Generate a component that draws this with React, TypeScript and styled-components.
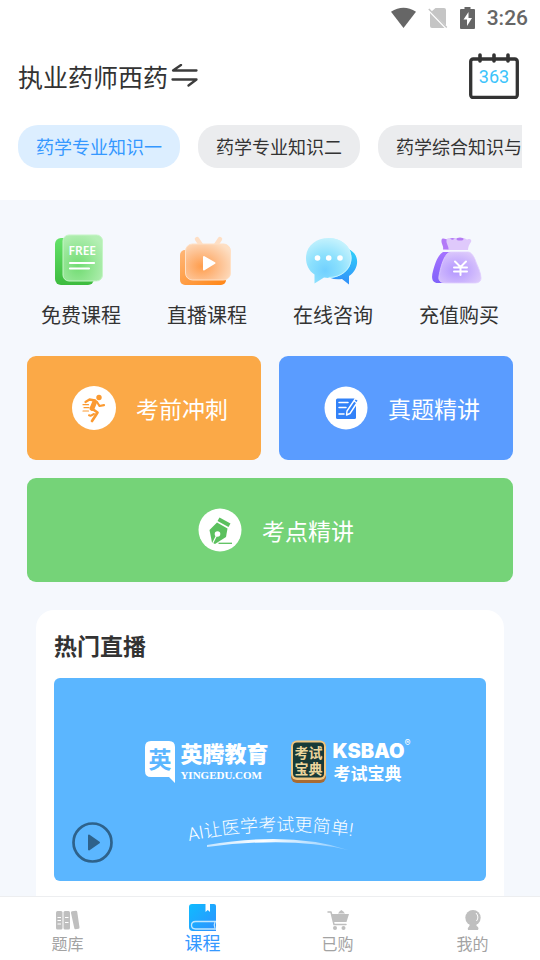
import React from "react";
import styled, { createGlobalStyle } from "styled-components";

const GlobalStyle = createGlobalStyle`
  * { box-sizing: border-box; }
  body {
    margin: 0;
    background: #f5f8fd;
    color: #333;
    font-family: "Noto Sans CJK SC", sans-serif;
  }
  button { font: inherit; color: inherit; border: 0; padding: 0; background: none; cursor: pointer; }
  svg { display: block; flex: none; }
`;

const Screen = styled.div`
  height: 100vh;
  display: flex;
  flex-direction: column;
  overflow: hidden;
`;

const Header = styled.header`
  flex: none;
  background: #fff;
  padding: 0 18px 32px;
`;

const StatusBar = styled.div`
  height: 36px;
  margin-right: -6px;
  display: flex;
  align-items: center;
  justify-content: flex-end;
  gap: 12px;
  color: #666;
  font-family: Roboto, sans-serif;
  font-size: 21px;
  font-weight: 500;
  line-height: 36px;
`;

const TitleRow = styled.div`
  display: flex;
  align-items: center;
  justify-content: space-between;
  padding: 17px 3px 0 0;
`;

const CourseSwitch = styled.button`
  display: flex;
  align-items: center;
  gap: 3px;
  font-size: 25px;
  line-height: 46px;
`;

const CourseName = styled.h1`
  margin: 0;
  font: inherit;
`;

const Calendar = styled.button`
  display: grid;
  width: 50px;
  height: 46px;
  > * { grid-area: 1 / 1; }
`;

const DayCount = styled.span`
  color: #3cc4fb;
  font-family: Roboto, sans-serif;
  font-size: 18px;
  line-height: 48px;
  text-align: center;
`;

const Tabs = styled.div`
  display: flex;
  gap: 18px;
  margin-top: 26px;
  overflow: hidden;
`;

const Tab = styled.button<{ $active?: boolean }>`
  flex: none;
  height: 43px;
  padding: 0 18px;
  border-radius: 20px;
  font-size: 18px;
  line-height: 43px;
  white-space: nowrap;
  background: ${(p) => (p.$active ? "#dceeff" : "#ebecee")};
  color: ${(p) => (p.$active ? "#3598ff" : "#333")};
`;

const Content = styled.main`
  flex: 1;
  min-height: 0;
  overflow: hidden;
`;

const Shortcuts = styled.div`
  display: grid;
  grid-template-columns: repeat(4, 1fr);
  padding: 33px 18px 27px;
`;

const Shortcut = styled.button`
  display: flex;
  flex-direction: column;
  align-items: center;
  gap: 14px;
  font-size: 20px;
  line-height: 28px;
`;

const Features = styled.div`
  display: grid;
  grid-template-columns: 1fr 1fr;
  gap: 18px;
  padding: 0 27px;
`;

const Feature = styled.button<{ $color: string; $wide?: boolean }>`
  grid-column: ${(p) => (p.$wide ? "1 / -1" : "auto")};
  height: 104px;
  display: flex;
  align-items: center;
  justify-content: center;
  gap: 20px;
  padding-left: 12px;
  border-radius: 9px;
  background: ${(p) => p.$color};
  color: #fff;
  font-size: 23px;
  line-height: 32px;
`;

const Panel = styled.section`
  margin: 28px 36px 0;
  padding: 18px 18px 48px;
  border-radius: 18px;
  background: #fff;
`;

const PanelTitle = styled.h2`
  margin: 0 0 16px;
  font-size: 23px;
  font-weight: 700;
  line-height: 34px;
`;

const Banner = styled.div`
  position: relative;
  min-height: 203px;
  display: flex;
  flex-direction: column;
  align-items: center;
  padding-top: 60px;
  padding-left: 16px;
  border-radius: 6px;
  background: #5bb6ff;
  color: #fff;
`;

const Brands = styled.div`
  display: flex;
  gap: 23px;
`;

const Brand = styled.div`
  display: flex;
  gap: 5px;
`;

const BrandText = styled.div`
  display: flex;
  flex-direction: column;
  font-weight: 700;
`;

const YingName = styled.span`
  font-size: 22px;
  font-weight: 900;
  line-height: 28px;
`;

const YingDomain = styled.span`
  font-family: "Liberation Serif", serif;
  font-size: 11px;
  line-height: 18px;
`;

const KsName = styled.span`
  display: flex;
  font-family: Inter, "Liberation Sans", sans-serif;
  font-size: 20px;
  font-weight: 900;
  line-height: 26px;
`;

const Registered = styled.span`
  font-size: 9px;
  font-weight: 400;
  line-height: 10px;
`;

const KsChinese = styled.span`
  padding-left: 1px;
  font-size: 17px;
  line-height: 18px;
`;

const Slogan = styled.div`
  margin-top: 24px;
`;

const PlayButton = styled.button`
  position: absolute;
  left: 18px;
  bottom: 18px;
`;

const NavBar = styled.nav`
  flex: none;
  height: 64px;
  display: grid;
  grid-template-columns: repeat(4, 1fr);
  background: #fff;
  border-top: 1px solid #edeef0;
`;

const NavItem = styled.a<{ $active?: boolean }>`
  display: flex;
  flex-direction: column;
  align-items: center;
  justify-content: flex-end;
  padding-bottom: ${(p) => (p.$active ? 7 : 6)}px;
  gap: ${(p) => (p.$active ? 0 : 2)}px;
  color: ${(p) => (p.$active ? "#3598ff" : "#a3a3a3")};
  font-size: ${(p) => (p.$active ? 18 : 16)}px;
  line-height: 22px;
  text-decoration: none;
`;

const WifiIcon = () => (
  <svg width="25" height="22" viewBox="0 0 26 22" fill="#666" aria-hidden="true">
    <path d="M0 4.500Q13-4 26 4.500L13 21.500Z" />
  </svg>
);

const NoSimIcon = () => (
  <svg width="20" height="22" viewBox="0 0 20 22" aria-hidden="true">
    <path d="M7.500 1H16q2 0 2 2v15.500L3.500 4.500ZM2 6l14.500 15H4q-2 0-2-2Z" fill="#c5c5c5" />
    <path d="M.8 2l18 18.500" stroke="#c5c5c5" strokeWidth="1.500" />
  </svg>
);

const BatteryIcon = () => (
  <svg width="15" height="22" viewBox="0 0 15 22" aria-hidden="true">
    <path d="M4.500 0h6v2H14q1 0 1 1v18q0 1-1 1H1q-1 0-1-1V3q0-1 1-1h3.500Z" fill="#666" />
    <path d="M8.500 5L3.500 12.500H7V19l5-8H8.500Z" fill="#fff" />
  </svg>
);

const SwapIcon = () => (
  <svg width="27" height="25" viewBox="0 0 27 25" fill="none" stroke="#3c3c3c" strokeWidth="2.300" strokeLinecap="round" strokeLinejoin="round" aria-hidden="true">
    <path d="M25.500 6.500H2l8-5.500M1.500 15.500H25.500L17.500 21.500" />
  </svg>
);

const CalendarIcon = () => (
  <svg width="50" height="46" viewBox="0 0 50 46" fill="none" stroke="#333" strokeLinecap="round" aria-hidden="true">
    <rect x="1.700" y="6" width="46.600" height="38.500" rx="2.500" strokeWidth="3.300" />
    <path d="M11 2v6M25 2v6M39 2v6" strokeWidth="3.600" />
  </svg>
);

const FreeIcon = () => (
  <svg width="54" height="54" viewBox="0 0 54 54" aria-hidden="true">
    <defs>
      <linearGradient id="freeBack" x1="0" y1="0" x2="0" y2="1">
        <stop stopColor="#65e26a" /><stop offset="1" stopColor="#3dbb3e" />
      </linearGradient>
      <radialGradient id="freeFront" cx=".38" cy=".68" r=".75">
        <stop stopColor="#71dc72" /><stop offset="1" stopColor="#b5efb5" />
      </radialGradient>
    </defs>
    <rect x="1" y="5" width="39" height="47" rx="6" fill="url(#freeBack)" />
    <rect x="9" y="2" width="39.500" height="46" rx="6" fill="url(#freeFront)" stroke="#c5f5c6" />
    <text x="14.500" y="22" fill="#fff" fontFamily="Noto Sans" fontWeight="600" fontSize="12">FREE</text>
    <path d="M16 30h24M16 35.500h19" stroke="#fff" strokeWidth="2.200" strokeLinecap="round" />
  </svg>
);

const LiveIcon = () => (
  <svg width="54" height="54" viewBox="0 0 54 54" aria-hidden="true">
    <defs>
      <linearGradient id="liveBack" x1="0" y1="0" x2="1" y2="1">
        <stop stopColor="#ffb779" /><stop offset="1" stopColor="#ff8514" />
      </linearGradient>
      <radialGradient id="liveFront" cx=".36" cy=".62" r=".75">
        <stop stopColor="#ff9d4c" /><stop offset=".55" stopColor="#fdc191" /><stop offset="1" stopColor="#fddfc4" />
      </radialGradient>
    </defs>
    <rect x="0" y="17" width="46" height="35" rx="5" fill="url(#liveBack)" />
    <path d="M17 6l4 6M40 6l-4 6" stroke="#fedfc5" strokeWidth="4.500" strokeLinecap="round" />
    <rect x="5.500" y="11" width="45" height="36" rx="7" fill="url(#liveFront)" stroke="#ffe0c5" />
    <path d="M24 24l10.500 6L24 36.500Z" fill="#fff" stroke="#fff" strokeWidth="2" strokeLinejoin="round" />
  </svg>
);

const ChatIcon = () => (
  <svg width="54" height="54" viewBox="0 0 54 54" aria-hidden="true">
    <defs>
      <linearGradient id="chatBack" x1=".7" y1="0" x2=".5" y2="1">
        <stop stopColor="#31d0fa" /><stop offset="1" stopColor="#318df9" />
      </linearGradient>
      <radialGradient id="chatFront" cx=".42" cy=".72" r=".75">
        <stop stopColor="#70d0ff" /><stop offset=".45" stopColor="#8be0fd" /><stop offset="1" stopColor="#c8f3fd" />
      </radialGradient>
    </defs>
    <path d="M42 16c13 5 11 21 1 27v8.500L36 46c-8 1-14-1-18-5Z" fill="url(#chatBack)" />
    <path d="M22.500 5C35 5 45.500 13 45.500 25S35 45 22.500 45l-4.500-.5-9.500 6V41.500C3 38 0 32 0 25 0 13 10 5 22.500 5Z" fill="url(#chatFront)" />
    <path d="M22.500 5.500C35 5.500 45 13.500 45 25S35 44.500 22.500 44.500" fill="none" stroke="#c3f3ff" />
    <g fill="#fff"><circle cx="11.500" cy="25" r="2.800" /><circle cx="22.700" cy="25" r="2.800" /><circle cx="34" cy="25" r="2.800" /></g>
  </svg>
);

const MoneyIcon = () => (
  <svg width="54" height="54" viewBox="0 0 54 54" aria-hidden="true">
    <defs>
      <linearGradient id="bagBack" x1="0" y1="0" x2="0" y2="1">
        <stop stopColor="#a673ff" /><stop offset="1" stopColor="#8062fa" />
      </linearGradient>
      <radialGradient id="bagFront" cx=".42" cy=".6" r=".65">
        <stop stopColor="#b295ff" /><stop offset="1" stopColor="#ddcafb" />
      </radialGradient>
    </defs>
    <path d="M11 16.500C12 13 9 11 9.500 7c.5-2.500 3-1.500 4-1 2 1 4-1 7-1l5 1 5 11Z" fill="#b37af7" />
    <path d="M16.500 17C17 13 14 11 14.500 7c.5-2.500 3-2 5-.5 2 1 3-1.500 5-1.500h7c2 0 3 2.500 5 1 2-.5 3.500 1 2.500 3-2 3-3 5-3 8Z" fill="#dfc9fb" />
    <ellipse cx="28" cy="6" rx="3.500" ry="1.600" fill="#b57bf4" />
    <path d="M11 19h20L27 50H6C0 50-1 45 1 38 3 31 5 23 11 19Z" fill="url(#bagBack)" />
    <path d="M19 19h17c3 0 6 4 8 10 2 5 5 11 5 16 0 4-3 5-7 5H14c-5 0-8-2-7-7 1-6 5-24 12-24Z" fill="url(#bagFront)" stroke="#dfceff" strokeWidth=".8" />
    <path d="M23 28.500l5.500 5.500 5.500-5.500M28.500 34v8M22 34.500h13M22 38.500h13" fill="none" stroke="#fff" strokeWidth="2" strokeLinecap="round" strokeLinejoin="round" />
  </svg>
);

const RunnerIcon = () => (
  <svg width="44" height="44" viewBox="0 0 44 44" aria-hidden="true">
    <circle cx="22" cy="22" r="22" fill="#fff" />
    <g fill="none" stroke="#fb9a31" strokeLinecap="round" strokeLinejoin="round">
      <circle cx="27" cy="11.500" r="2.700" fill="#fb9a31" stroke="none" />
      <path d="M13.500 16l4-2.500 5.500 1" strokeWidth="2.300" />
      <path d="M22.700 16L20 22.500" strokeWidth="4.800" />
      <path d="M25 16l2.500 4 4.500-.8" strokeWidth="2.200" />
      <path d="M20.500 23l5 3.500-2.500 4-3 4.500" strokeWidth="2.700" />
      <path d="M22 28l-3.500 1.800-1.500-.5" strokeWidth="2" />
      <path d="M11 18.700h5.500M12 21.700h5M11 25h5.500" strokeWidth="1.200" />
    </g>
  </svg>
);

const NoteIcon = () => (
  <svg width="44" height="44" viewBox="0 0 44 44" aria-hidden="true">
    <circle cx="22" cy="22" r="21.500" fill="#fff" />
    <path d="M13.500 12.500h16.500q2 0 2 1.500v17.500q0 1.500-1.500 1.500h-17q-1.500 0-1.500-1.500V14q0-1.500 1.500-1.500Z" fill="#3282f8" />
    <path d="M15 16.500h9M15 21.500h7M15 28h5" stroke="#fff" strokeWidth="1.500" strokeLinecap="round" />
    <path d="M31.500 12.500l3 2-8.500 13-3.500 1.500.5-4Z" fill="#3282f8" stroke="#fff" strokeWidth="1.400" strokeLinejoin="round" />
    <path d="M30 15l3 2" stroke="#fff" strokeWidth="1.200" />
  </svg>
);

const PenIcon = () => (
  <svg width="44" height="44" viewBox="0 0 44 44" aria-hidden="true">
    <circle cx="22" cy="22" r="21.500" fill="#fff" />
    <path d="M21.500 9.500L32.500 15.500l-2 3.500L19.500 13Z" fill="#5bc05e" />
    <path d="M19 14.500l10.500 6-1.500 8.500-11 7-3-1.500L11.500 22Z" fill="#5bc05e" />
    <circle cx="19.500" cy="26" r="2.800" fill="#fff" />
    <path d="M18.500 27.500L14.800 35" stroke="#fff" strokeWidth="1.200" />
    <path d="M20.500 35.300H34" stroke="#5bc05e" strokeWidth="1.300" />
  </svg>
);

const YingLogo = () => (
  <svg width="30" height="46" viewBox="0 0 30 46" aria-hidden="true">
    <path d="M6 3h18q6 0 6 6v36l-6-6H6q-6 0-6-6V9q0-6 6-6Z" fill="#fff" />
    <text x="15" y="30" fill="#5bb6ff" fontFamily="Noto Sans CJK SC" fontWeight="700" fontSize="23" textAnchor="middle">英</text>
  </svg>
);

const KsLogo = () => (
  <svg width="36" height="46" viewBox="0 0 36 46" aria-hidden="true">
    <rect x="0" y="3" width="35" height="42" rx="6" fill="#a96b32" />
    <rect x="0" y="2.500" width="35" height="39.500" rx="6" fill="#efc581" />
    <rect x="2" y="4.500" width="31" height="35" rx="4" fill="#173a38" />
    <g fill="#ecd59c" fontFamily="Noto Sans CJK SC" fontWeight="700" fontSize="14" textAnchor="middle">
      <text x="17.500" y="20">考试</text>
      <text x="17.500" y="36">宝典</text>
    </g>
  </svg>
);

const SloganArt = () => (
  <svg width="190" height="48" viewBox="0 0 190 48" fill="none">
    <defs>
      <path id="sloganCurve" d="M6 33Q96 14 186 31" />
      <linearGradient id="brush" x1="0" x2="1">
        <stop stopColor="#fff" stopOpacity=".65" /><stop offset=".4" stopColor="#fff" /><stop offset="1" stopColor="#fff" stopOpacity=".25" />
      </linearGradient>
    </defs>
    <text fill="#fff" fontFamily="Roboto, Noto Sans CJK SC" fontWeight="300" fontSize="18">
      <textPath href="#sloganCurve">AI让医学考试更简单!</textPath>
    </text>
    <path d="M24 37Q108 23 165 42Q108 28 24 39Z" fill="url(#brush)" />
  </svg>
);

const PlayIcon = () => (
  <svg width="41" height="41" viewBox="0 0 41 41" aria-hidden="true">
    <circle cx="20.500" cy="20.500" r="19" fill="none" stroke="#2e628b" strokeWidth="2.700" />
    <path d="M17 13.500l10 7-10 7Z" fill="#2e628b" stroke="#2e628b" strokeWidth="2" strokeLinejoin="round" />
  </svg>
);

const BooksIcon = () => (
  <svg width="24" height="20" viewBox="0 0 24 20" aria-hidden="true">
    <g fill="#bfbfbf">
      <rect x="0" y="1" width="6.500" height="18.500" rx="1.500" />
      <rect x="7.500" y="1" width="6.500" height="18.500" rx="1.500" />
      <path d="M16 1.200l4-.5q1 0 1.200 1l2.300 15.500q0 1.500-1 1.600l-3 .5q-1 0-1.200-1L15 3q-.2-1.500 1-1.800Z" />
    </g>
    <path d="M1.500 7.500h3.500M1.500 10.500h3.500M1.500 14h3.500M9 7.500h3.500M9 12.500h3.500" stroke="#fff" />
  </svg>
);

const BookIcon = () => (
  <svg width="27" height="27" viewBox="0 0 27 27" aria-hidden="true">
    <defs>
      <linearGradient id="book" x1="0" y1="0" x2="1" y2="1">
        <stop stopColor="#0fbcff" /><stop offset="1" stopColor="#2f91ff" />
      </linearGradient>
    </defs>
    <path d="M3 0h22q2 0 2 2v25H4q-4 0-4-4V3q0-3 3-3Z" fill="url(#book)" />
    <path d="M16.500 0h4.500v8l-2.200-2-2.300 2Z" fill="#fff" />
    <path d="M27 17.500H6.500q-4 .2-4 3.700t4 3.800H27M26 18q-1.500 3 0 6" fill="none" stroke="#c1e7ff" strokeWidth="1.300" />
  </svg>
);

const CartIcon = () => (
  <svg width="22" height="20" viewBox="0 0 22 20" aria-hidden="true">
    <g fill="#bfbfbf">
      <path d="M11 3.500l1.500-2 1.800-1.500 2 1.500 1.700 2Z" />
      <path d="M4.500 4H22l-2.500 8H6.500Z" />
      <circle cx="8" cy="18" r="2" /><circle cx="16.500" cy="18" r="2" />
    </g>
    <path d="M1 2h3l3 12.500h12" fill="none" stroke="#bfbfbf" strokeWidth="1.500" strokeLinecap="round" strokeLinejoin="round" />
  </svg>
);

const PersonIcon = () => (
  <svg width="18" height="20" viewBox="0 0 18 20" aria-hidden="true">
    <circle cx="9" cy="7.700" r="7.700" fill="#bfbfbf" />
    <path d="M6 13h6q0 3 2 4 1 1.500 0 3H4q-1-2 1-3.500Q6 15 6 13Z" fill="#bfbfbf" />
    <path d="M12 3Q15.500 7 12.500 11" fill="none" stroke="#fff" strokeWidth="1" />
  </svg>
);

const tabs = ["药学专业知识一", "药学专业知识二", "药学综合知识与技能"];

const shortcuts = [
  { label: "免费课程", icon: <FreeIcon /> },
  { label: "直播课程", icon: <LiveIcon /> },
  { label: "在线咨询", icon: <ChatIcon /> },
  { label: "充值购买", icon: <MoneyIcon /> },
];

const features = [
  { label: "考前冲刺", icon: <RunnerIcon />, color: "#fba947" },
  { label: "真题精讲", icon: <NoteIcon />, color: "#5a9cff" },
  { label: "考点精讲", icon: <PenIcon />, color: "#75d378", wide: true },
];

const navItems = [
  { label: "题库", icon: <BooksIcon /> },
  { label: "课程", icon: <BookIcon />, active: true },
  { label: "已购", icon: <CartIcon /> },
  { label: "我的", icon: <PersonIcon /> },
];

export default function App() {
  return (
    <Screen>
      <GlobalStyle />
      <Header>
        <StatusBar>
          <WifiIcon />
          <NoSimIcon />
          <BatteryIcon />
          <span>3:26</span>
        </StatusBar>
        <TitleRow>
          <CourseSwitch>
            <CourseName>执业药师西药</CourseName>
            <SwapIcon />
          </CourseSwitch>
          <Calendar>
            <CalendarIcon />
            <DayCount>363</DayCount>
          </Calendar>
        </TitleRow>
        <Tabs>
          {tabs.map((label, i) => (
            <Tab key={label} $active={i === 0}>{label}</Tab>
          ))}
        </Tabs>
      </Header>
      <Content>
        <Shortcuts>
          {shortcuts.map((s) => (
            <Shortcut key={s.label}>
              {s.icon}
              <span>{s.label}</span>
            </Shortcut>
          ))}
        </Shortcuts>
        <Features>
          {features.map((f) => (
            <Feature key={f.label} $color={f.color} $wide={f.wide}>
              {f.icon}
              <span>{f.label}</span>
            </Feature>
          ))}
        </Features>
        <Panel>
          <PanelTitle>热门直播</PanelTitle>
          <Banner>
            <Brands>
              <Brand>
                <YingLogo />
                <BrandText>
                  <YingName>英腾教育</YingName>
                  <YingDomain>YINGEDU.COM</YingDomain>
                </BrandText>
              </Brand>
              <Brand>
                <KsLogo />
                <BrandText>
                  <KsName>KSBAO<Registered>®</Registered></KsName>
                  <KsChinese>考试宝典</KsChinese>
                </BrandText>
              </Brand>
            </Brands>
            <Slogan><SloganArt /></Slogan>
            <PlayButton aria-label="播放"><PlayIcon /></PlayButton>
          </Banner>
        </Panel>
      </Content>
      <NavBar>
        {navItems.map((n) => (
          <NavItem key={n.label} href="#" $active={n.active}>
            {n.icon}
            <span>{n.label}</span>
          </NavItem>
        ))}
      </NavBar>
    </Screen>
  );
}
